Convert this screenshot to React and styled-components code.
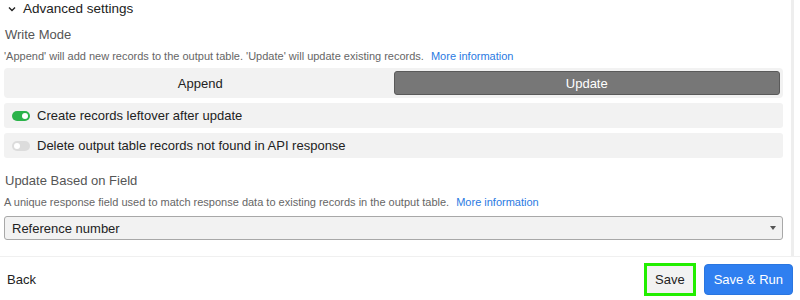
import styled, { createGlobalStyle } from 'styled-components';

const GlobalStyle = createGlobalStyle`
  html, body {
    margin: 0;
    padding: 0;
    background: #fff;
    font-family: "Liberation Sans", Arial, sans-serif;
  }
`;

const Page = styled.div`
  width: 800px;
  height: 300px;
  display: flex;
  flex-direction: column;
  overflow: hidden;
`;

const Body = styled.div`
  height: 256px;
  display: flex;
  border-bottom: 1px solid #f0f0f0;
`;

const Content = styled.div`
  flex: 1;
  padding: 0 8px 0 4px;
`;

const Scrollbar = styled.div`
  width: 3px;
  margin-right: 6px;
  background: #eeeeee;
`;

const SectionToggle = styled.div`
  display: flex;
  align-items: center;
  gap: 7px;
  height: 17px;
  padding-left: 4px;
  font-size: 13.5px;
  color: #222;
`;

const Label = styled.div`
  margin-top: ${({ $top }) => $top}px;
  padding-left: 1px;
  font-size: 13px;
  color: #555;
`;

const Hint = styled.div`
  margin-top: 8px;
  font-size: 11px;
  color: #666;

  a {
    color: #2a7ae2;
    text-decoration: none;
    margin-left: 7px;
  }
`;

const Segmented = styled.div`
  margin-top: 6px;
  height: 30px;
  background: #f2f2f2;
  border-radius: 4px;
  display: grid;
  grid-template-columns: 1fr 1fr;
  padding: 3px;
  box-sizing: border-box;
`;

const Segment = styled.div`
  display: flex;
  align-items: center;
  justify-content: center;
  font-size: 13px;
  border-radius: 3px;
  color: ${({ $active }) => ($active ? '#fff' : '#222')};
  background: ${({ $active }) => ($active ? '#777' : 'transparent')};
  border: 1px solid ${({ $active }) => ($active ? '#5a5a5a' : 'transparent')};
`;

const ToggleRow = styled.div`
  margin-top: 5px;
  height: 25px;
  background: #f2f2f2;
  border-radius: 3px;
  display: flex;
  align-items: center;
  gap: 7px;
  padding-left: 8px;
  font-size: 13px;
  color: #222;
`;

const Switch = styled.span`
  position: relative;
  width: 18px;
  height: 10px;
  border-radius: 5px;
  background: ${({ $on }) => ($on ? '#2bb34a' : '#dcdcdc')};

  &::after {
    content: '';
    position: absolute;
    top: 2px;
    left: ${({ $on }) => ($on ? '10px' : '2px')};
    width: 6px;
    height: 6px;
    border-radius: 50%;
    background: #fff;
  }
`;

const Select = styled.div`
  margin-top: 8px;
  height: 24px;
  box-sizing: border-box;
  background: #f2f2f2;
  border: 1px solid #a8a8a8;
  border-radius: 3px;
  display: flex;
  align-items: center;
  justify-content: space-between;
  padding: 0 6px 0 7px;
  font-size: 13px;
  color: #222;
`;

const Caret = styled.span`
  width: 0;
  height: 0;
  border-left: 3px solid transparent;
  border-right: 3px solid transparent;
  border-top: 4px solid #555;
`;

const Footer = styled.div`
  flex: 1;
  display: flex;
  align-items: center;
  justify-content: space-between;
  padding: 2px 7px 0 7px;
`;

const BackLink = styled.div`
  font-size: 13px;
  color: #222;
`;

const Actions = styled.div`
  display: flex;
  align-items: center;
  gap: 8px;
`;

const Button = styled.button`
  height: ${({ $focused }) => ($focused ? '33px' : '31px')};
  font-family: inherit;
  font-size: 13px;
  padding: 0 ${({ $primary }) => ($primary ? '9px' : '8px')};
  color: ${({ $primary }) => ($primary ? '#fff' : '#222')};
  background: ${({ $primary }) => ($primary ? '#2f7ff0' : '#f2f2f2')};
  border: ${({ $primary, $focused }) =>
    $focused ? '3px solid #22ee00' : $primary ? '1px solid #2a76e0' : '1px solid #ddd'};
  border-radius: ${({ $focused }) => ($focused ? '0' : '4px')};
`;

export default function App() {
  return (
    <Page>
      <GlobalStyle />
      <Body>
        <Content>
          <SectionToggle>
            <svg width="8" height="6" viewBox="0 0 8 6">
              <path d="M1 1.5 L4 4.5 L7 1.5" fill="none" stroke="#222" strokeWidth="1.4" />
            </svg>
            Advanced settings
          </SectionToggle>
          <Label $top={10}>Write Mode</Label>
          <Hint>
            'Append' will add new records to the output table. 'Update' will update existing records.
            <a href="#">More information</a>
          </Hint>
          <Segmented>
            <Segment>Append</Segment>
            <Segment $active>Update</Segment>
          </Segmented>
          <ToggleRow>
            <Switch $on />
            Create records leftover after update
          </ToggleRow>
          <ToggleRow>
            <Switch />
            Delete output table records not found in API response
          </ToggleRow>
          <Label $top={15}>Update Based on Field</Label>
          <Hint>
            A unique response field used to match response data to existing records in the output table.
            <a href="#">More information</a>
          </Hint>
          <Select>
            Reference number
            <Caret />
          </Select>
        </Content>
        <Scrollbar />
      </Body>
      <Footer>
        <BackLink>Back</BackLink>
        <Actions>
          <Button $focused>Save</Button>
          <Button $primary>Save &amp; Run</Button>
        </Actions>
      </Footer>
    </Page>
  );
}
